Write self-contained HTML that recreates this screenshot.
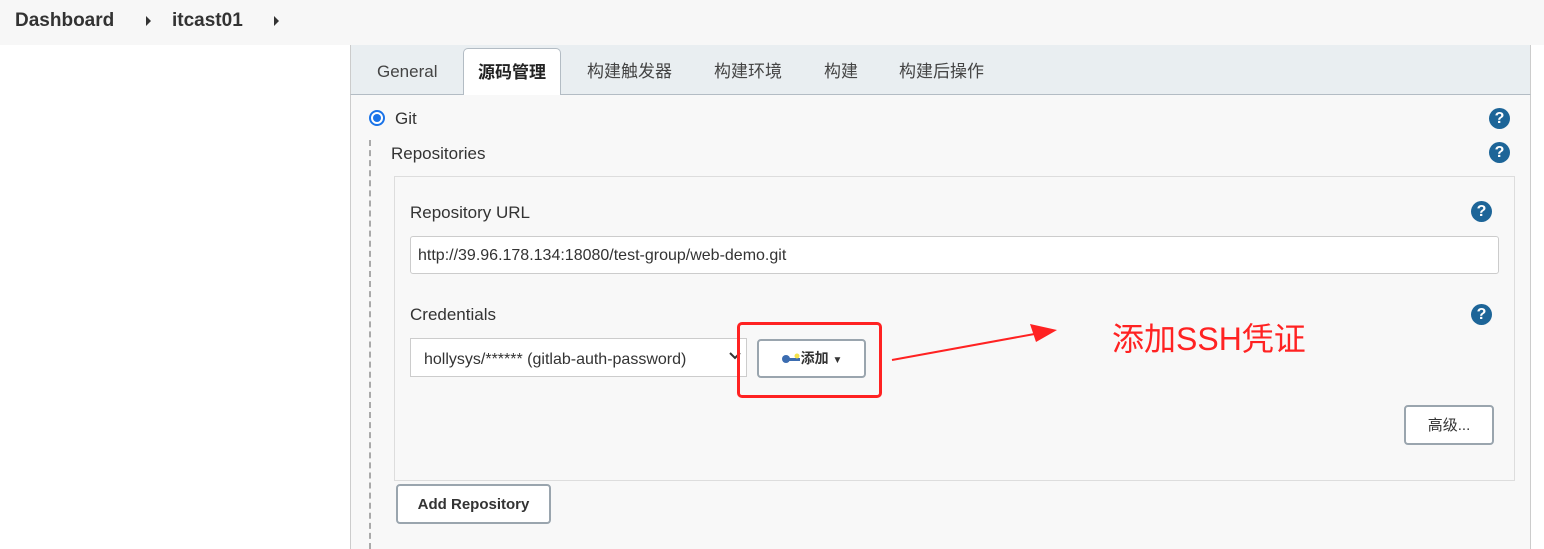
<!DOCTYPE html>
<html><head><meta charset="utf-8"><style>
*{box-sizing:border-box;margin:0;padding:0}
body{width:1544px;height:549px;background:#fff;font-family:"Liberation Sans","Noto Sans CJK SC",sans-serif;color:#333;position:relative;overflow:hidden}
.a{position:absolute}
.top{left:0;top:0;width:1544px;height:45px;background:#f7f7f7}
.bc{font-weight:bold;font-size:19px;color:#333;top:10px}
.tri{width:0;height:0;border-top:5px solid transparent;border-bottom:5px solid transparent;border-left:5px solid #333}
.panel{left:350px;top:45px;width:1181px;height:504px;background:#f8f8f8;border-left:1px solid #ccc;border-right:1px solid #ccc}
.tabs{left:350px;top:45px;width:1181px;height:50px;background:#e9eef1;border-bottom:1px solid #b3bcc4;border-left:1px solid #ccc;border-right:1px solid #ccc}
.tab{top:61px;font-size:17px;color:#444;line-height:22px;height:22px}
.tabact{left:463px;top:48px;width:98px;height:47px;background:#fff;border:1px solid #b3bcc4;border-bottom:none;border-radius:5px 5px 0 0;font-weight:bold;font-size:17px;text-align:center;line-height:48px;color:#222}
.help{width:21px;height:21px;border-radius:50%;background:#1d6598;color:#fff;font-weight:bold;font-size:16px;text-align:center;line-height:21px}
.lbl{font-size:17px;color:#333}
.inner{left:394px;top:176px;width:1121px;height:305px;border:1px solid #ddd;background:#f8f8f8}
.btn{border:2px solid #9aa5ae;border-radius:4px;background:#fff;font-size:15px;font-weight:bold;color:#333;text-align:center}
</style></head><body>
<div class="a top"></div>
<div class="a bc" style="left:15px">Dashboard</div>
<div class="a tri" style="left:146px;top:16px"></div>
<div class="a bc" style="left:172px">itcast01</div>
<div class="a tri" style="left:274px;top:16px"></div>

<div class="a panel"></div>
<div class="a tabs"></div>
<div class="a tab" style="left:377px">General</div>
<div class="a tabact">源码管理</div>
<div class="a tab" style="left:587px">构建触发器</div>
<div class="a tab" style="left:714px">构建环境</div>
<div class="a tab" style="left:824px">构建</div>
<div class="a tab" style="left:899px">构建后操作</div>

<div class="a" style="left:369px;top:110px;width:16px;height:16px;border-radius:50%;border:2px solid #1a73e8;background:#fff"><div style="margin:2px;width:8px;height:8px;border-radius:50%;background:#1a73e8"></div></div>
<div class="a lbl" style="left:395px;top:109px">Git</div>
<div class="a help" style="left:1489px;top:108px">?</div>
<div class="a" style="left:369px;top:140px;height:409px;border-left:2px dashed #aaa"></div>
<div class="a lbl" style="left:391px;top:144px">Repositories</div>
<div class="a help" style="left:1489px;top:142px">?</div>

<div class="a inner"></div>
<div class="a lbl" style="left:410px;top:203px">Repository URL</div>
<div class="a help" style="left:1471px;top:201px">?</div>
<div class="a" style="left:410px;top:236px;width:1089px;height:38px;background:#fff;border:1px solid #ccc;border-radius:3px;font-size:16px;line-height:38px;padding-left:7px;color:#333">http://39.96.178.134:18080/test-group/web-demo.git</div>
<div class="a lbl" style="left:410px;top:305px">Credentials</div>
<div class="a help" style="left:1471px;top:304px">?</div>
<div class="a" style="left:410px;top:338px;width:337px;height:39px;background:#fff;border:1px solid #ccc;font-size:16px;line-height:42px;padding-left:13px;color:#333;overflow:hidden;white-space:nowrap">hollysys/****** (gitlab-auth-password)</div>
<svg class="a" style="left:729px;top:352px" width="12" height="8"><polyline points="1,1 6,6 11,1" fill="none" stroke="#333" stroke-width="2"/></svg>
<div class="a btn" style="left:757px;top:339px;width:109px;height:39px;line-height:35px;font-size:14px"><svg width="20" height="12" style="vertical-align:middle"><circle cx="5" cy="6" r="4" fill="#3b6cb0"/><rect x="6" y="5" width="13" height="3" fill="#3b6cb0"/><circle cx="16" cy="3" r="2.5" fill="#f5e24a"/></svg>添加 <span style="font-size:10px">&#9660;</span></div>
<div class="a" style="left:737px;top:322px;width:145px;height:76px;border:3px solid #f22;border-radius:5px"></div>
<svg class="a" style="left:880px;top:318px" width="190" height="50"><line x1="12" y1="42" x2="160" y2="15" stroke="#f22" stroke-width="2"/><polygon points="177,12 150,6 156,24" fill="#f22"/></svg>
<div class="a" style="left:1112px;top:314px;font-size:32px;color:#f22">添加SSH凭证</div>

<div class="a btn" style="left:1404px;top:405px;width:90px;height:40px;line-height:38px;font-weight:normal">高级...</div>
<div class="a btn" style="left:396px;top:484px;width:155px;height:40px;line-height:38px">Add Repository</div>
</body></html>
